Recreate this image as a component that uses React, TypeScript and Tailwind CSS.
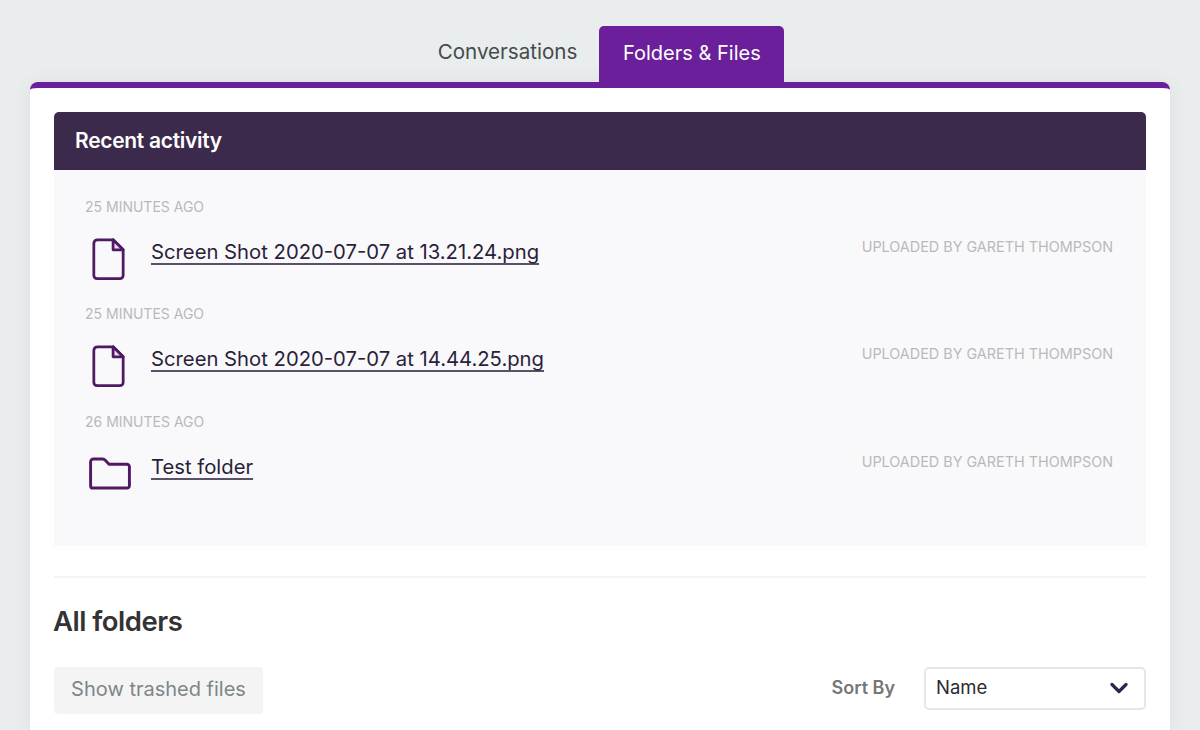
const FileIcon = () => (
  <svg width="33" height="44" viewBox="0 0 36 46" fill="none" stroke="#4f1a63" strokeWidth="3" strokeLinejoin="round" strokeLinecap="round">
    <path d="M6 2h17l11 11v28a3.500 3.500 0 0 1-3.500 3.500H5.500A3.500 3.500 0 0 1 2 41V6a4 4 0 0 1 4-4z" />
    <path d="M23 2v11h11z" fill="#e6dcea" />
  </svg>
);

const FolderIcon = () => (
  <svg width="44" height="33" viewBox="0 0 44 34" fill="none" stroke="#4f1a63" strokeWidth="3" strokeLinejoin="round">
    <path d="M2 5a3 3 0 0 1 3-3h9.500c1 0 1.800.4 2.400 1.200L21 7.500h18.500a2.500 2.500 0 0 1 2.500 2.500v19.500a2.500 2.500 0 0 1-2.500 2.500h-35A2.500 2.500 0 0 1 2 29.500z" />
  </svg>
);

const activity = [
  { when: "25 MINUTES AGO", name: "Screen Shot 2020-07-07 at 13.21.24.png", kind: "file", row: "h-[107px]" },
  { when: "25 MINUTES AGO", name: "Screen Shot 2020-07-07 at 14.44.25.png", kind: "file", row: "h-[108px]" },
  { when: "26 MINUTES AGO", name: "Test folder", kind: "folder", row: "h-[108px]" },
];

export default function App() {
  return (
    <div className="h-[730px] overflow-hidden bg-[#e9eded] font-['Inter',sans-serif]">
      {/* Tabs */}
      <div className="flex h-[82px] items-end justify-center pl-[22px]">
        <div className="flex items-end gap-[22px]">
          <button className="h-[56px] pb-[3px] text-[20.6px] text-[#454a4c]">Conversations</button>
          <button className="h-[56px] w-[185px] rounded-t-[5px] bg-[#6b1f9a] pb-[3px] text-[20px] text-white">Folders &amp; Files</button>
        </div>
      </div>

      {/* Card */}
      <div className="mx-[30px] h-[648px] rounded-t-[8px] border-t-[6px] border-[#6b1f9a] bg-white px-6 pt-6 shadow-[0_0_20px_rgba(0,0,0,0.06)]">
        <div className="flex h-[58px] items-center rounded-t-[5px] bg-[#3b2a4c] px-[21px] text-[21px] font-semibold tracking-[-0.3px] text-white">
          Recent activity
        </div>
        <div className="h-[376px] bg-[#f9f8fb] pl-[31px] pr-[33px] pt-[27px]">
          {activity.map((a) => (
            <div key={a.when + a.name} className={a.row}>
              <div className="text-[14px] leading-5 text-[#b9b8bd]">{a.when}</div>
              <div className="mt-[7px] flex items-start justify-between">
                <div className="flex items-start">
                  <div className="flex h-[69px] w-[66px] items-center pl-[3px]">
                    {a.kind === "file" ? <div className="pl-[4px]"><FileIcon /></div> : <FolderIcon />}
                  </div>
                  <a className="mt-[14px] text-[20.25px] leading-7 text-[#2a1f3a] underline decoration-[#5b5068] underline-offset-4">{a.name}</a>
                </div>
                <div className="mt-[13px] text-[14.4px] leading-5 text-[#b9b8bd]">UPLOADED BY GARETH THOMPSON</div>
              </div>
            </div>
          ))}
        </div>

        <div className="mt-[30px] border-t-2 border-[#f3f2f4]" />
        <h2 className="mt-[25px] -ml-px text-[27.5px] font-semibold leading-9 tracking-[-0.5px] text-[#333333]">All folders</h2>

        <div className="mt-[28px] flex items-start justify-between">
          <button className="h-[47px] w-[209px] rounded-[4px] bg-[#f4f4f4] pb-[4px] text-[20px] text-[#7d8689]">Show trashed files</button>
          <div className="flex items-center gap-[29px]">
            <span className="pb-[2px] text-[18px] font-semibold text-[#777777]">Sort By</span>
            <div className="flex h-[43px] w-[222px] items-center justify-between rounded-[5px] border-2 border-[#e6e6e8] bg-white pb-[2px] pl-[10px] pr-[16px] text-[18.5px] text-[#2b2b30]">
              Name
              <svg width="18" height="12" viewBox="0 0 18 12" fill="none" stroke="#33234a" strokeWidth="3.2" strokeLinecap="round" strokeLinejoin="round">
                <path d="M2 2.500l7 7 7-7" />
              </svg>
            </div>
          </div>
        </div>
      </div>
    </div>
  );
}
